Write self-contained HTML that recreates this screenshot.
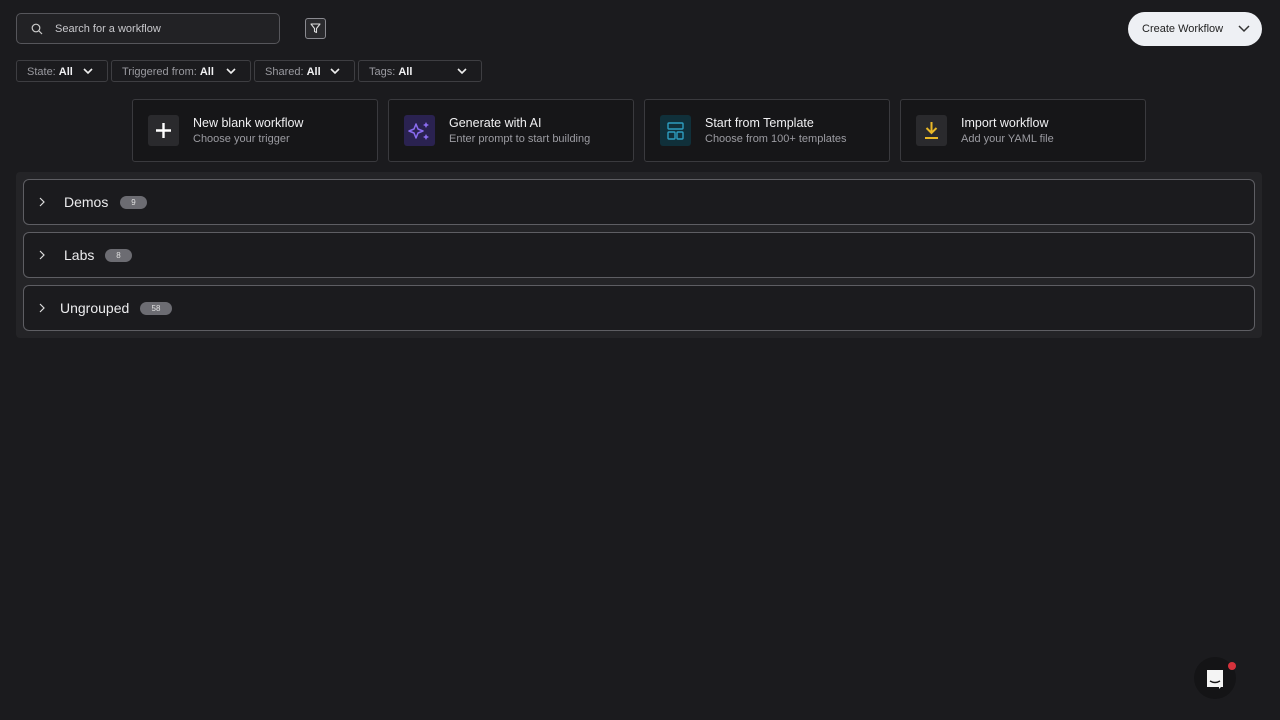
<!DOCTYPE html>
<html><head><meta charset="utf-8"><style>
*{box-sizing:border-box;margin:0;padding:0}
body{width:1280px;height:720px;background:#1b1b1e;font-family:"Liberation Sans",sans-serif;color:#e8e8ea;position:relative;overflow:hidden}
.abs{position:absolute}
.search{left:16px;top:13px;width:264px;height:31px;border:1px solid #56565b;border-radius:5px;background:#222225;font-size:11px;color:#c8c8cc;padding-left:38px;line-height:31px}
.filt{left:305px;top:18px;width:21px;height:21px;border:1px solid #8a8a90;border-radius:3px;background:#2a2a2d}
.dd{top:60px;height:22px;border:1px solid #3e3e42;border-radius:3px;font-size:11px;color:#9a9aa0;line-height:22px;padding-left:10px}
.dd b{color:#f2f2f4}
.dd svg{position:absolute;right:14px;top:7px}
.cw{left:1128px;top:12px;width:134px;height:34px;border-radius:17px;background:#eef0f4;color:#222;font-size:11px;line-height:34px;padding-left:14px}
.card{top:99px;width:246px;height:63px;border:1px solid #3a3a3e;border-radius:3px;background:#161618}
.card .ic{position:absolute;left:15px;top:15px;width:31px;height:31px;border-radius:3px}
.card .t{position:absolute;left:60px;top:16px;font-size:12.5px;color:#f0f0f2}
.card .s{position:absolute;left:60px;top:33px;font-size:11px;color:#9c9ca2}
.grp{left:16px;top:172px;width:1246px;height:166px;background:#242427;border-radius:4px}
.row{left:23px;width:1232px;height:46px;border:1px solid #5e5e63;border-radius:6px;background:#1b1b1e}
.row svg{position:absolute;left:14px;top:17px}
.row .n{position:absolute;top:14px;font-size:14px;color:#ececee}
.row .b{position:absolute;top:16px;height:13px;border-radius:7px;background:#6c6c72;font-size:8px;color:#e0e0e0;text-align:center;line-height:13px}
</style></head><body>
<div class="abs search">Search for a workflow</div>
<svg class="abs" style="left:31px;top:23px" width="12" height="12" viewBox="0 0 12 12"><circle cx="5" cy="5" r="3.8" fill="none" stroke="#ccc" stroke-width="1.2"/><path d="M8 8l3 3" stroke="#ccc" stroke-width="1.2"/></svg>
<div class="abs filt"><svg width="19" height="19" viewBox="0 0 19 19"><path d="M5 5h9l-3.5 4.5v4l-2 -1v-3z" fill="none" stroke="#ddd" stroke-width="1.1" stroke-linejoin="round"/></svg></div>

<div class="abs dd" style="left:16px;width:92px">State: <b>All</b><svg width="10" height="7" viewBox="0 0 10 7"><path d="M1 1l4 4 4-4" fill="none" stroke="#eee" stroke-width="1.6"/></svg></div>
<div class="abs dd" style="left:111px;width:140px">Triggered from: <b>All</b><svg width="10" height="7" viewBox="0 0 10 7"><path d="M1 1l4 4 4-4" fill="none" stroke="#eee" stroke-width="1.6"/></svg></div>
<div class="abs dd" style="left:254px;width:101px">Shared: <b>All</b><svg width="10" height="7" viewBox="0 0 10 7"><path d="M1 1l4 4 4-4" fill="none" stroke="#eee" stroke-width="1.6"/></svg></div>
<div class="abs dd" style="left:358px;width:124px">Tags: <b>All</b><svg width="10" height="7" viewBox="0 0 10 7"><path d="M1 1l4 4 4-4" fill="none" stroke="#eee" stroke-width="1.6"/></svg></div>

<div class="abs cw">Create Workflow<svg style="position:absolute;right:12px;top:13px" width="12" height="8" viewBox="0 0 12 8"><path d="M1 1l5 5 5-5" fill="none" stroke="#333" stroke-width="1.5"/></svg></div>

<div class="abs card" style="left:132px"><div class="ic" style="background:#2a2a2d"><svg width="31" height="31"><path d="M15.5 8v15M8 15.5h15" stroke="#fff" stroke-width="2.4"/></svg></div><div class="t">New blank workflow</div><div class="s">Choose your trigger</div></div>
<div class="abs card" style="left:388px"><div class="ic" style="background:#2a2250"><svg width="31" height="31"><path d="M12 9l2 5 5 2-5 2-2 5-2-5-5-2 5-2z" fill="none" stroke="#8a6cf0" stroke-width="1.5" stroke-linejoin="round"/><path d="M22 7l1 2 2 1-2 1-1 2-1-2-2-1 2-1zM22 19l1 2 2 1-2 1-1 2-1-2-2-1 2-1z" fill="#8a6cf0"/></svg></div><div class="t">Generate with AI</div><div class="s">Enter prompt to start building</div></div>
<div class="abs card" style="left:644px"><div class="ic" style="background:#10303a"><svg width="31" height="31" fill="none" stroke="#2d9ec0" stroke-width="1.4"><rect x="8" y="8" width="15" height="6" rx="1"/><rect x="8" y="17" width="7" height="7" rx="1"/><rect x="17" y="17" width="6" height="7" rx="1"/></svg></div><div class="t">Start from Template</div><div class="s">Choose from 100+ templates</div></div>
<div class="abs card" style="left:900px"><div class="ic" style="background:#2a2a2d"><svg width="31" height="31" fill="none" stroke="#e9b827" stroke-width="2"><path d="M15.5 7v11M10.5 13l5 5 5-5M9 23h13"/></svg></div><div class="t">Import workflow</div><div class="s">Add your YAML file</div></div>

<div class="abs grp"></div>
<div class="abs row" style="top:179px"><svg width="8" height="10" viewBox="0 0 8 10"><path d="M2 1l4 4-4 4" fill="none" stroke="#ddd" stroke-width="1.2"/></svg><span class="n" style="left:40px">Demos</span><span class="b" style="left:96px;width:27px">9</span></div>
<div class="abs row" style="top:232px"><svg width="8" height="10" viewBox="0 0 8 10"><path d="M2 1l4 4-4 4" fill="none" stroke="#ddd" stroke-width="1.2"/></svg><span class="n" style="left:40px">Labs</span><span class="b" style="left:81px;width:27px">8</span></div>
<div class="abs row" style="top:285px"><svg width="8" height="10" viewBox="0 0 8 10"><path d="M2 1l4 4-4 4" fill="none" stroke="#ddd" stroke-width="1.2"/></svg><span class="n" style="left:36px">Ungrouped</span><span class="b" style="left:116px;width:32px">58</span></div>

<div class="abs" style="left:1194px;top:657px;width:42px;height:42px;border-radius:21px;background:#141416"></div>
<svg class="abs" style="left:1205px;top:669px" width="20" height="22" viewBox="0 0 20 22"><path d="M2 1h16v17h-2l-2 2v-2H2z" fill="#f4f4f4"/><path d="M5 12q5 3 10 0" fill="none" stroke="#141416" stroke-width="1.4"/></svg>
<div class="abs" style="left:1228px;top:662px;width:8px;height:8px;border-radius:4px;background:#d6323c"></div>
</body></html>
